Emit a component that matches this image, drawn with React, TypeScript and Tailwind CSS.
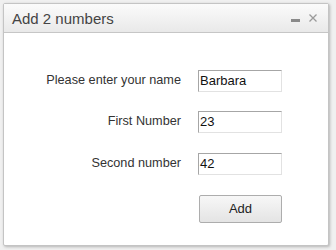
import React from "react";

export default function App() {
  const rows: [string, string, string][] = [
    ["Please enter your name", "Barbara", ""],
    ["First Number", "23", "mt-[19px]"],
    ["Second number", "42", "mt-[20px]"],
  ];
  return (
    <div className="w-[336px] h-[250px] bg-[#f0f0f0] pl-[3px] pt-[3px] overflow-hidden" style={{ fontFamily: '"Liberation Sans", Arial, sans-serif' }}>
      <div className="w-[326px] h-[243px] bg-white border border-[#c4c4c4] rounded-[2px] shadow-[1px_1px_3px_rgba(0,0,0,0.25)] flex flex-col">
        <div className="h-[29px] shrink-0 flex items-center justify-between pl-[8px] pr-[10px] bg-gradient-to-b from-[#fbfbfb] to-[#e9e9e9] border-b border-[#c6c6c6]">
          <span className="text-[15px] text-[#444] leading-none">Add 2 numbers</span>
          <div className="flex items-center gap-[8px]">
            <div className="w-[9px] h-[3px] bg-[#8a8a8a] mt-[4px]" />
            <svg width="10" height="10" viewBox="0 0 10 10" className="mb-[1px]">
              <path d="M1.5 1.5 L8.5 8.5 M8.5 1.5 L1.5 8.5" stroke="#9a9a9a" strokeWidth="1.3" />
            </svg>
          </div>
        </div>
        <div className="flex flex-col pt-[37px]">
          {rows.map(([label, value, mt], i) => (
            <div key={i} className={"flex items-center " + mt}>
              <div className="w-[177px] text-right text-[12.7px] text-[#333]">{label}</div>
              <div className="ml-[17px] w-[84px] h-[22px] border border-t-[#a6a6a6] border-l-[#a6a6a6] border-r-[#e2e2e2] border-b-[#e2e2e2] flex items-center pl-[1px] text-[13px] text-[#111]">
                {value}
              </div>
            </div>
          ))}
          <div className="flex mt-[20px]">
            <button className="ml-[195px] w-[83px] h-[28px] border border-[#adadad] rounded-[2px] bg-gradient-to-b from-[#f7f7f7] to-[#e4e4e4] text-[13px] text-[#222]">
              Add
            </button>
          </div>
        </div>
      </div>
    </div>
  );
}
